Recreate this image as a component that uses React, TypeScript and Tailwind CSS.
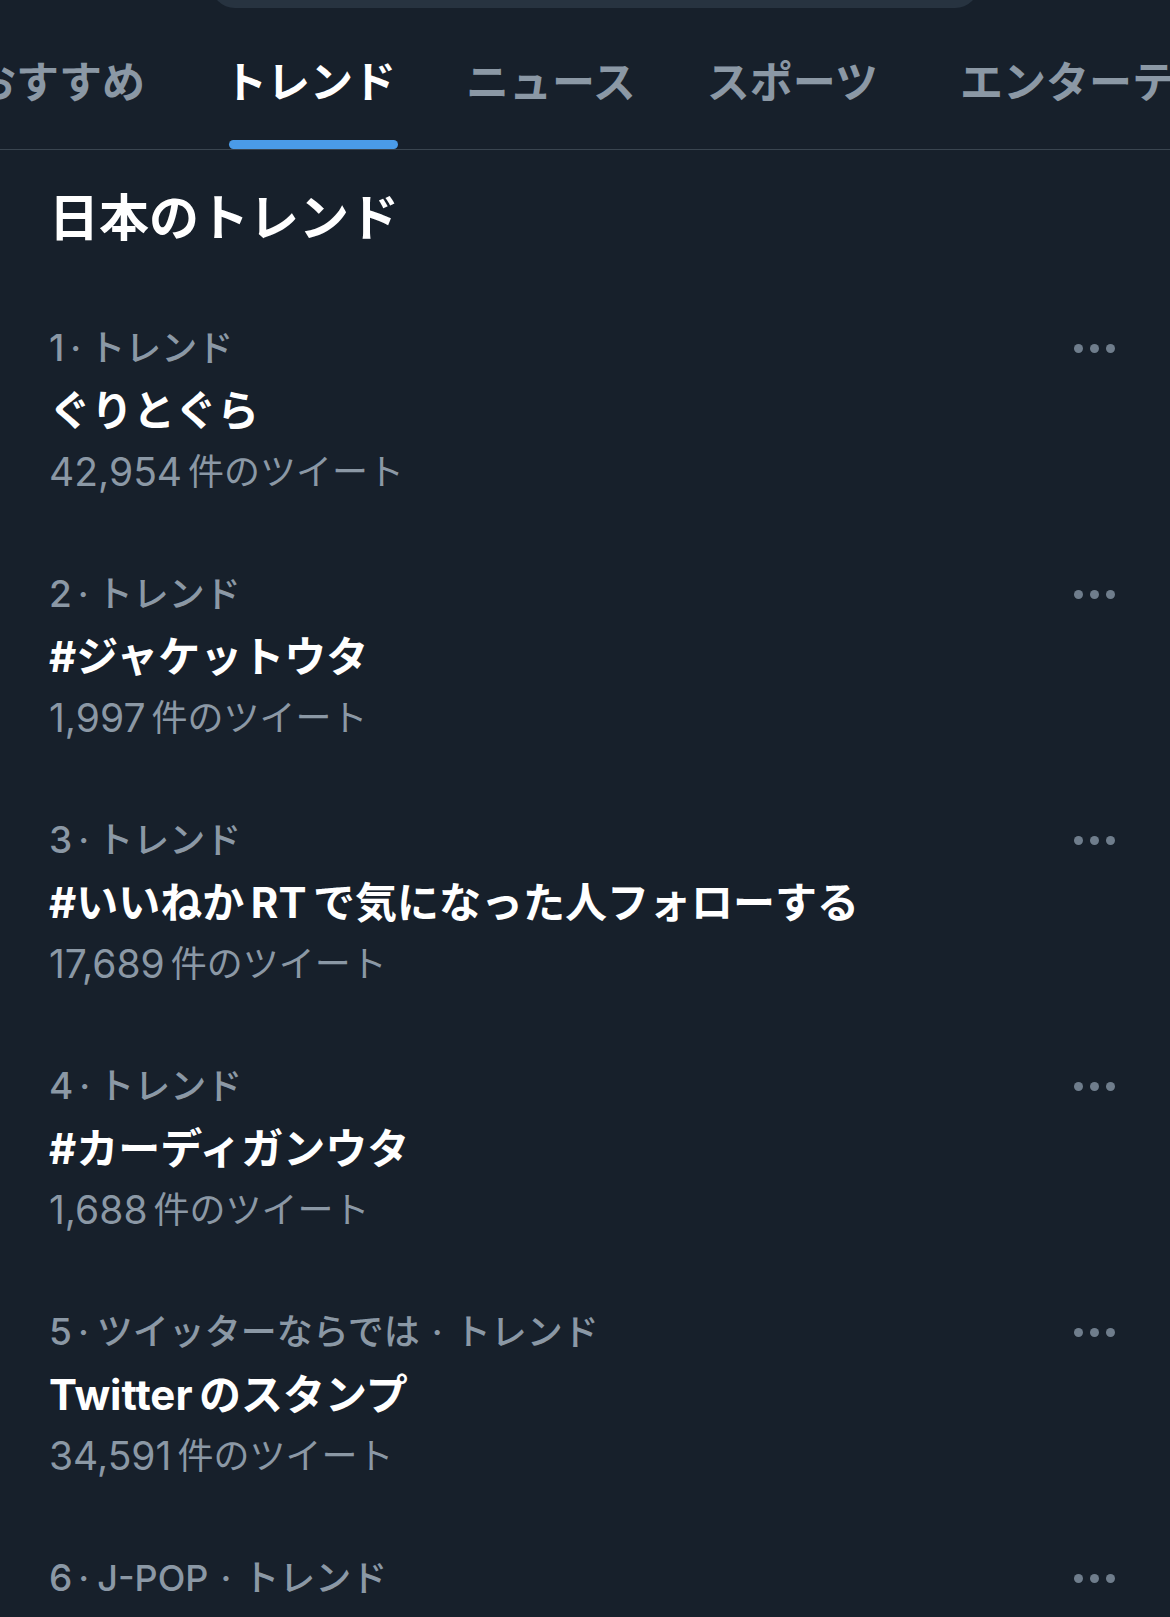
import React from "react";

const FONT = { fontFamily: '"Inter", "Noto Sans CJK JP", sans-serif' };

type Trend = { rank: number; cat?: string; title: string; count?: string };

const trends: Trend[] = [
  { rank: 1, title: "ぐりとぐら", count: "42,954" },
  { rank: 2, title: "#ジャケットウタ", count: "1,997" },
  { rank: 3, title: "#いいねか\u2009RT\u2009で気になった人フォローする", count: "17,689" },
  { rank: 4, title: "#カーディガンウタ", count: "1,688" },
  { rank: 5, cat: "ツイッターならでは", title: "Twitter\u2009のスタンプ", count: "34,591" },
  { rank: 6, cat: "J-POP", title: "", count: "" },
];

function Dots() {
  return (
    <div className="flex h-[62px] items-center gap-[7px] pr-[55px]">
      <span className="block h-[9px] w-[9px] rounded-full bg-[#6f7d8c]" />
      <span className="block h-[9px] w-[9px] rounded-full bg-[#6f7d8c]" />
      <span className="block h-[9px] w-[9px] rounded-full bg-[#6f7d8c]" />
    </div>
  );
}

function TrendItem({ t }: { t: Trend }) {
  return (
    <div className="flex justify-between py-[30px]">
      <div className="flex flex-col pl-[49px]">
        <div className="flex h-[62px] items-center text-[36px] font-medium text-[#8b98a5]">
          <span className="text-[37px]">{t.rank}</span>
          <span className="pl-[6px] pr-[8px]">·</span>
          {t.cat ? (
            <>
              <span>{t.cat}</span>
              <span className="px-[12px]">·</span>
            </>
          ) : null}
          <span>トレンド</span>
        </div>
        <div className="flex h-[62px] items-center text-[42px] font-bold text-white">
          {t.title}
        </div>
        <div className="flex h-[62px] items-center text-[#8b98a5]">
          <span className="text-[39px]">{t.count}</span>
          <span className="ml-[6px] text-[36px]">件のツイート</span>
        </div>
      </div>
      <Dots />
    </div>
  );
}

const tabs = [
  { label: "おすすめ", ml: "ml-[-27px]", active: false },
  { label: "トレンド", ml: "ml-[84px]", active: true },
  { label: "ニュース", ml: "ml-[68px]", active: false },
  { label: "スポーツ", ml: "ml-[71px]", active: false },
  { label: "エンターテインメント", ml: "ml-[82px]", active: false },
];

export default function App() {
  return (
    <div
      className="h-[1617px] w-[1170px] overflow-hidden bg-[#17202b]"
      style={FONT}
    >
      <div className="h-[8px] overflow-hidden pl-[211px]">
        <div className="mt-[-40px] h-[48px] w-[768px] rounded-full bg-[#273340]" />
      </div>
      <div className="flex h-[142px] items-end overflow-hidden whitespace-nowrap border-b border-[#3a4550]">
        {tabs.map((tab) => (
          <div key={tab.label} className={`flex shrink-0 flex-col ${tab.ml}`}>
            <div
              className={`flex h-[132px] items-center pt-[16px] text-[43px] font-bold ${
                tab.active ? "-ml-[5px] text-white" : "text-[#8b98a5]"
              }`}
            >
              {tab.label}
            </div>
            <div
              className={`h-[9px] rounded-full ${
                tab.active ? "w-[169px] bg-[#4a9be8]" : "bg-transparent"
              }`}
            />
          </div>
        ))}
      </div>
      <div className="flex h-[137px] items-center pl-[49px] text-[50px] font-bold text-white">
        日本のトレンド
      </div>
      {trends.map((t) => (
        <TrendItem key={t.rank} t={t} />
      ))}
    </div>
  );
}
